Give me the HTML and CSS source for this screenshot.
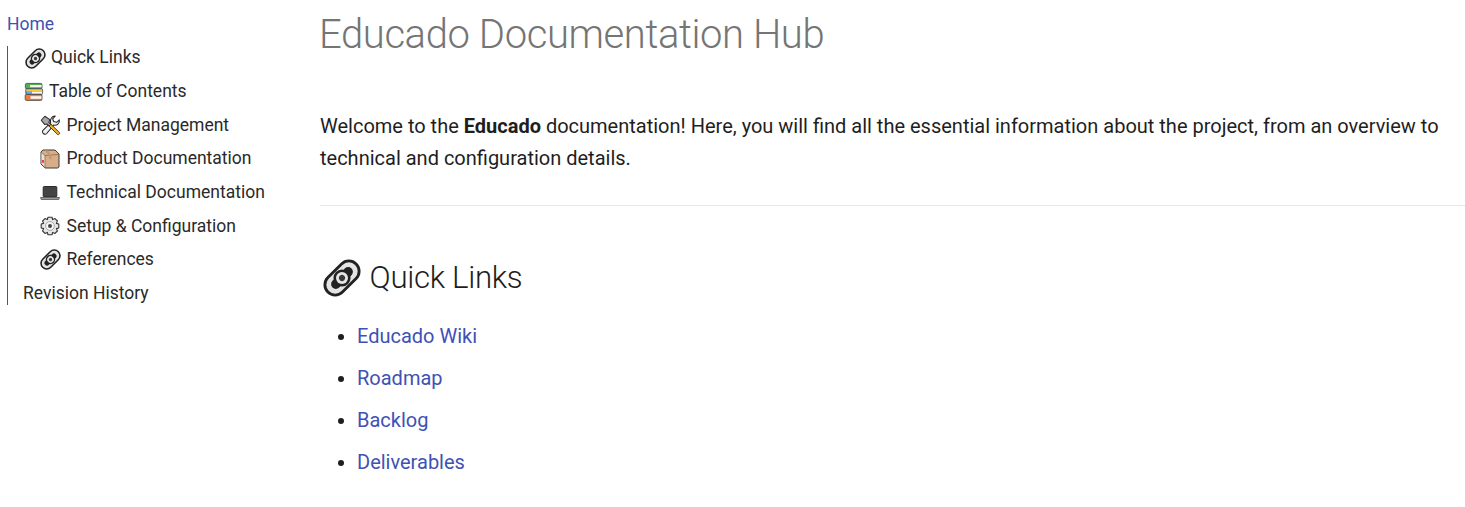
FILE: index.html
```html
<!DOCTYPE html>
<html lang="en">
<head>
<meta charset="utf-8">
<title>Educado Documentation Hub</title>
<link rel="stylesheet" href="styles.css">
</head>
<body>
<svg class="defs" width="0" height="0" aria-hidden="true">
  <defs>
    <g id="i-link">
      <g transform="rotate(-45 12 12)">
        <rect x="-1.5" y="4.6" width="27" height="14.8" rx="7.4" fill="#222"/>
        <rect x="0.3" y="6.4" width="23.4" height="11.2" rx="5.6" fill="#e4e4e4"/>
        <rect x="3.5" y="9" width="17" height="6" rx="3" fill="#222"/>
        <circle cx="12" cy="12" r="5.4" fill="#222"/>
        <circle cx="12" cy="12" r="3.8" fill="#e6e6e6"/>
        <circle cx="12" cy="12" r="1.9" fill="#3a3a3a"/>
      </g>
    </g>
  </defs>
</svg>
<div class="page">
  <nav class="side">
    <a class="home" href="#">Home</a>
    <ul class="tree">
      <li class="item"><svg class="ico ico-link" viewBox="0 0 24 24"><use href="#i-link"/></svg><span>Quick Links</span></li>
      <li class="item"><svg class="ico ico-books" viewBox="0 0 20 20">
        <rect x="1.4" y="1.4" width="16.6" height="5.4" rx="1.2" fill="#4caf50" stroke="#444" stroke-width=".8"/>
        <rect x="6" y="3" width="11.6" height="2.2" fill="#f7f7f7"/>
        <rect x="1.8" y="6.8" width="16.8" height="5.6" rx="1.2" fill="#62aee8" stroke="#444" stroke-width=".8"/>
        <rect x="2.4" y="7.4" width="15.8" height="1.8" fill="#f4c93a"/>
        <rect x="8" y="9.6" width="10.2" height="2" fill="#f7f7f7"/>
        <rect x="1.2" y="12.4" width="16.8" height="6" rx="1.2" fill="#f07a36" stroke="#444" stroke-width=".8"/>
        <rect x="6.5" y="14.2" width="11" height="2.6" fill="#f8f8f8"/>
      </svg><span>Table of Contents</span></li>
      <li class="item sub"><svg class="ico ico-ref" viewBox="0 0 20 20">
        <path d="M14.5 1 L12 3.6 L13 6.2 L15.8 7 L18.4 4.6 C19.2 8 16 10.6 13 9.6 L6.4 17.6 C4.6 19.6 1 16.6 2.8 14.6 L10 7.6 C9.2 4 11.4 0.8 14.5 1Z" fill="#f0f0f0" stroke="#2a2a2a" stroke-width="1" stroke-linejoin="round"/>
        <path d="M1.2 5 L4.6 1.2 L9.4 4.4 L8.4 7 L10.6 9.2 L9 10.8 L6.8 8.6 L4.4 9Z" fill="#a8a8a8" stroke="#2a2a2a" stroke-width="1" stroke-linejoin="round"/>
        <path d="M8.6 10.6 L10.4 8.8 L18.6 16.8 C19.2 17.6 17.6 19.2 16.8 18.6Z" fill="#f5b21d" stroke="#3a3020" stroke-width=".9" stroke-linejoin="round"/>
      </svg><span>Project Management</span></li>
      <li class="item sub"><svg class="ico" viewBox="0 0 20 20">
        <path d="M1 3 L2.8 1 L15 1 L19 5 L19 18 L17.6 19 L5 19 L1 15Z" fill="#d9ad88" stroke="#3c3c3c" stroke-width="1" stroke-linejoin="round"/>
        <path d="M1.5 3.2 L5 6.6 L5 18.6 L1.5 14.8Z" fill="#eedfd0"/>
        <path d="M1 3 L5 6.6 L19 5.4 M5 6.6 L5 19" fill="none" stroke="#8a6a50" stroke-width=".8"/>
        <path d="M7.5 1.4 L11.6 6 L11.6 10.5 L9 9.6 L9 6.4 L5 1.4Z" fill="#c39974"/>
        <rect x="1.8" y="11" width="2.2" height="2.8" fill="#dc4a5a"/>
      </svg><span>Product Documentation</span></li>
      <li class="item sub"><svg class="ico" viewBox="0 0 20 20">
        <rect x="3.2" y="3.5" width="13.6" height="10.5" rx="1" fill="#444" stroke="#2a2a2a"/>
        <path d="M0.5 14.5 H19.5 L18.8 16.5 H1.2Z" fill="#9a9a9a" stroke="#555" stroke-width=".8" stroke-linejoin="round"/>
      </svg><span>Technical Documentation</span></li>
      <li class="item sub"><svg class="ico" viewBox="0 0 20 20">
        <path d="M8 1.2 H12 L12.6 3.6 L15 2.6 L17.4 5 L16.4 7.4 L18.8 8 V12 L16.4 12.6 L17.4 15 L15 17.4 L12.6 16.4 L12 18.8 H8 L7.4 16.4 L5 17.4 L2.6 15 L3.6 12.6 L1.2 12 V8 L3.6 7.4 L2.6 5 L5 2.6 L7.4 3.6Z" fill="#e6e6e6" stroke="#333" stroke-width="1.1" stroke-linejoin="round"/>
        <circle cx="10" cy="10" r="4.4" fill="#f6f6f6" stroke="#aaa"/>
        <circle cx="10" cy="10" r="2" fill="#444"/>
      </svg><span>Setup &amp; Configuration</span></li>
      <li class="item sub"><svg class="ico ico-ref" viewBox="0 0 24 24"><use href="#i-link"/></svg><span>References</span></li>
      <li class="item last"><span>Revision History</span></li>
    </ul>
  </nav>
  <main class="content">
    <h1 class="title">Educado Documentation Hub</h1>
    <p class="intro">Welcome to the <strong>Educado</strong> documentation! Here, you will find all the essential information about the project, from an overview to technical and configuration details.</p>
    <hr class="rule">
    <h2 class="heading"><svg class="ico-h2" viewBox="0 0 24 24"><use href="#i-link"/></svg>Quick Links</h2>
    <ul class="links">
      <li><a href="#">Educado Wiki</a></li>
      <li><a href="#">Roadmap</a></li>
      <li><a href="#">Backlog</a></li>
      <li><a href="#">Deliverables</a></li>
    </ul>
  </main>
</div>
</body>
</html>
```

FILE: styles.css
```css
* { box-sizing: border-box; }
html, body { margin: 0; padding: 0; background: #fff; }
body {
  font-family: Roboto, "Liberation Sans", sans-serif;
  color: #1e1e1e;
  overflow: hidden;
  height: 507px;
}
.defs { display: block; height: 0; }
a { color: #4051b5; text-decoration: none; }
.page { display: flex; }
.side {
  width: 320px;
  flex: none;
  padding: 13px 0 0 7px;
  font-size: 17.5px;
  line-height: 23.4px;
  color: #2a2a2a;
}
.home { display: block; margin-bottom: 9.4px; }
.tree {
  list-style: none;
  margin: 0;
  padding: 0.6px 0 0 15px;
  border-left: 1px solid #4051b5;
}
.item {
  display: flex;
  align-items: center;
  margin-bottom: 10.25px;
  height: 23.4px;
}
.item.last { margin-bottom: 0; }
.item.sub { padding-left: 16.5px; }
.ico { width: 20px; height: 20px; margin-right: 7px; flex: none; }
.ico-link { width: 21px; height: 21px; margin-left: 2px; margin-right: 5px; }
.ico-ref { width: 21px; height: 21px; margin-right: 6px; }
.ico-books { margin-left: 1px; margin-right: 5px; }
.content { flex: 1; min-width: 0; }
.title {
  margin: 0;
  padding-top: 11px;
  font-size: 40px;
  line-height: 48px;
  font-weight: 300;
  letter-spacing: -0.01em;
  text-indent: -1px;
  color: #757575;
}
.intro {
  margin: 51px 0 0;
  font-size: 20px;
  line-height: 32px;
}
.intro strong { font-weight: 700; }
.rule {
  margin: 31px 0 0;
  border: 0;
  border-top: 1px solid #e8e8e8;
}
.heading {
  display: flex;
  align-items: center;
  margin: 49px 0 0;
  font-size: 31.25px;
  line-height: 46px;
  font-weight: 300;
  letter-spacing: -0.01em;
}
.ico-h2 { width: 38px; height: 38px; margin: 0 8.6px 0 3px; flex: none; }
.links {
  margin: 19px 0 0;
  padding: 0 0 0 37px;
  font-size: 20px;
  line-height: 32px;
}
.links li { margin-bottom: 10px; }
```
